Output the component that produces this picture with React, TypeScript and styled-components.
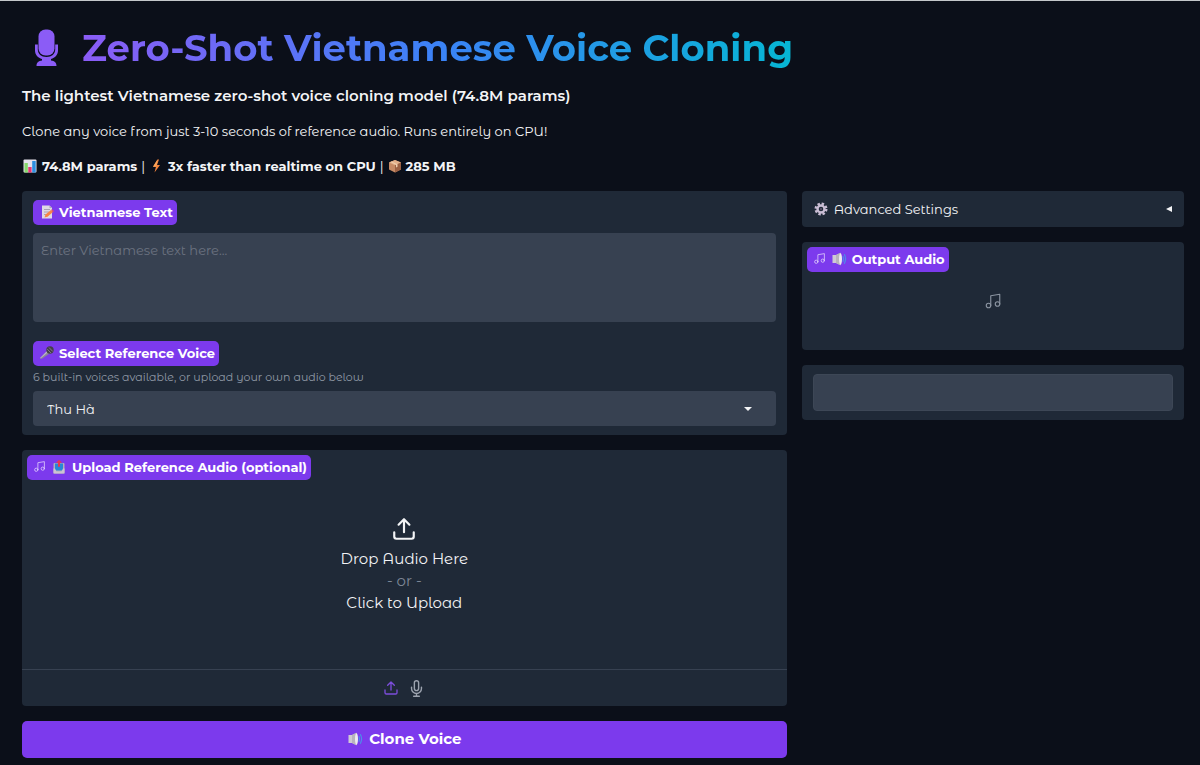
import React, { useState } from "react";
import styled, { createGlobalStyle, css } from "styled-components";

const heading = `Montserrat, Inter, "Noto Sans", sans-serif`;
const bodyFont = `"Montserrat Alternates", Montserrat, Inter, "Noto Sans", sans-serif`;

const GlobalStyle = createGlobalStyle`
  *, *::before, *::after { box-sizing: border-box; }
  body {
    margin: 0;
    background: #0b0f19;
    color: #f3f4f6;
    font-family: ${bodyFont};
    font-size: 13px;
    line-height: 20px;
  }
  button, input, select, textarea { font: inherit; color: inherit; }
`;

const Page = styled.main`
  border-top: 1px solid #c4c7ca;
  padding: 24px 16px 8px 22px;
`;

const Header = styled.header`
  display: flex;
  flex-direction: column;
  gap: 15px;
  margin-bottom: 15px;
`;

const Title = styled.h1`
  display: flex;
  align-items: center;
  gap: 23px;
  margin: 0;
  padding-left: 12px;
  font-family: ${heading};
  font-size: 37px;
  font-weight: 700;
  line-height: 46px;
  color: #8b5cf6;
`;

const GradientText = styled.span`
  background: linear-gradient(90deg, #8b5cf6 0%, #3b82f6 50%, #06b6d4 100%);
  -webkit-background-clip: text;
  background-clip: text;
  color: transparent;
`;

const Tagline = styled.p`
  margin: 0;
  font-family: ${heading};
  font-size: 15px;
  font-weight: 600;
`;

const Intro = styled.p`
  margin: 0;
`;

const Stats = styled.p`
  display: flex;
  align-items: center;
  gap: 4px;
  margin: 0;

  strong { font-family: ${heading}; font-weight: 700; }
`;

const Columns = styled.div`
  display: grid;
  grid-template-columns: minmax(0, 2fr) minmax(0, 1fr);
  gap: 15px;
  align-items: start;
`;

const Column = styled.div`
  display: flex;
  flex-direction: column;
  gap: 15px;
`;

const Panel = styled.section<{ $pad?: string }>`
  display: flex;
  flex-direction: column;
  align-items: stretch;
  padding: ${(p) => p.$pad ?? "9px 11px"};
  background: #1f2937;
  border-radius: 4px;
`;

const tag = css`
  display: flex;
  align-items: center;
  align-self: flex-start;
  height: 25px;
  padding: 0 4px 2px 6px;
  border-radius: 5px;
  background: #7c3aed;
  color: #fff;
  font-family: ${heading};
  font-size: 13px;
  font-weight: 700;
  white-space: nowrap;
`;

const FieldLabel = styled.label`
  ${tag}
  gap: 4px;
`;

const BlockLabel = styled.h2`
  ${tag}
  gap: 5px;
  margin: 0;

  svg:first-child { opacity: 0.75; }
`;

const TextArea = styled.textarea`
  height: 89px;
  margin: 8px 0 19px;
  padding: 7px 8px;
  border: 0;
  border-radius: 4px;
  background: #374151;
  resize: none;

  &::placeholder { color: #6b7280; opacity: 1; }
`;

const Hint = styled.p`
  margin: 1px 0 4px;
  font-size: 11px;
  color: #9099a6;
`;

const SelectBox = styled.div`
  position: relative;

  svg {
    position: absolute;
    right: 24px;
    top: 16px;
    pointer-events: none;
  }
`;

const Select = styled.select`
  display: block;
  width: 100%;
  height: 35px;
  padding: 0 14px;
  border: 0;
  border-radius: 4px;
  background: #374151;
  appearance: none;
`;

const DropZone = styled.button`
  display: flex;
  flex-direction: column;
  align-items: center;
  justify-content: center;
  height: 189px;
  margin: 0;
  padding: 0 0 20px;
  border: 0;
  background: none;
  font-size: 15px;
  line-height: 22px;
  cursor: pointer;

  svg { margin-bottom: 6px; }
`;

const Muted = styled.span`
  color: #7d8796;
`;

const Sources = styled.div`
  display: flex;
  align-items: center;
  justify-content: center;
  gap: 9px;
  height: 37px;
  border-top: 1px solid #374151;
`;

const SourceButton = styled.button<{ $active?: boolean }>`
  display: flex;
  padding: 0;
  border: 0;
  background: none;
  color: ${(p) => (p.$active ? "#7c4ddb" : "#9ca3af")};
  cursor: pointer;
`;

const CloneButton = styled.button`
  display: flex;
  align-items: center;
  justify-content: center;
  gap: 6px;
  height: 37px;
  padding: 0 0 2px;
  border: 0;
  border-radius: 5px;
  background: #7c3aed;
  color: #fff;
  font-family: ${heading};
  font-size: 15px;
  font-weight: 700;
  cursor: pointer;
`;

const Accordion = styled.button`
  display: flex;
  align-items: center;
  gap: 6px;
  height: 36px;
  padding: 0 12px;
  border: 0;
  border-radius: 4px;
  background: #1f2937;
  text-align: left;
  cursor: pointer;

  span { flex: 1; }
`;

const TagPad = styled.div`
  display: flex;
  padding: 5px 5px 0;
`;

const EmptyAudio = styled.div`
  display: flex;
  align-items: center;
  justify-content: center;
  height: 78px;
  padding-bottom: 20px;
  color: #8b94a1;
`;

const StatusInput = styled.input`
  width: 100%;
  height: 37px;
  padding: 0 8px;
  border: 1px solid #3d4756;
  border-radius: 4px;
  background: #374151;
`;

const Line = ({ size, width = 2, children }: { size: number; width?: number; children: React.ReactNode }) => (
  <svg width={size} height={size} viewBox="0 0 24 24" fill="none" stroke="currentColor" strokeWidth={width} strokeLinecap="round" strokeLinejoin="round" aria-hidden="true">
    {children}
  </svg>
);

const MusicIcon = ({ size }: { size: number }) => (
  <Line size={size} width={1.5}>
    <path d="M9 18V5l12-2v13" />
    <circle cx="6" cy="18" r="3" />
    <circle cx="18" cy="16" r="3" />
  </Line>
);

const UploadIcon = ({ size }: { size: number }) => (
  <Line size={size}>
    <path d="M21 15v4a2 2 0 0 1-2 2H5a2 2 0 0 1-2-2v-4" />
    <path d="M17 8l-5-5-5 5M12 3v12" />
  </Line>
);

const MicIcon = ({ size }: { size: number }) => (
  <Line size={size}>
    <path d="M12 1a3 3 0 0 0-3 3v8a3 3 0 0 0 6 0V4a3 3 0 0 0-3-3z" />
    <path d="M19 10v2a7 7 0 0 1-14 0v-2M12 19v4M8 23h8" />
  </Line>
);

const StudioMic = () => (
  <svg width="25" height="38" viewBox="0 0 25 38" fill="currentColor" aria-hidden="true">
    <rect x="4.500" y="0.500" width="16" height="26" rx="7" />
    <path d="M1 15.500h2.800v5c0 4.500 3.500 7.500 8.700 7.500s8.700-3 8.700-7.500v-5H24v6c0 4.500-3 7.200-7 8.500v1.500c3.500.5 5.500 2 5.500 5.500h-20c0-3.500 2-5 5.500-5.500V30c-4-1.300-7-4-7-8.500z" />
  </svg>
);

const ChartEmoji = () => (
  <svg width="16" height="16" viewBox="0 0 16 16" aria-hidden="true">
    <rect x="1.500" y="1.500" width="13" height="13" rx="1" fill="#e6e1ec" />
    <rect x="2.500" y="5" width="3.300" height="9.500" fill="#86d86b" />
    <rect x="6.300" y="9" width="3.300" height="5.500" fill="#e83472" />
    <rect x="10.200" y="3" width="3.500" height="11.500" fill="#2d8fe0" />
  </svg>
);

const BoltEmoji = () => (
  <svg width="15" height="16" viewBox="0 0 15 16" aria-hidden="true">
    <path d="M8.500 1.500L4 8.700h3L5.500 14.500 11 7H8l2-5.500z" fill="#f5843c" />
    <path d="M8.500 1.500L4 8.700h3l1-3z" fill="#fba45a" />
  </svg>
);

const BoxEmoji = () => (
  <svg width="14" height="16" viewBox="1 0 14 16" aria-hidden="true">
    <path d="M8 2l6 2.500v7L8 14.500 2 11.500v-7z" fill="#c78b66" />
    <path d="M8 2l6 2.500L8 7.200 2 4.500z" fill="#e3b08a" />
    <path d="M8 7.200l6-2.700v7l-6 3z" fill="#9c6144" />
    <path d="M4.500 3.500l6 2.700v2.600l-1.500.6V6.700L3.500 4z" fill="#f0d0b0" />
  </svg>
);

const MemoEmoji = () => (
  <svg width="16" height="16" viewBox="0 0 16 16" aria-hidden="true">
    <path d="M3 1.500h7.500l2.500 2.500v10.500H3z" fill="#ded9e5" />
    <path d="M10.500 1.500V4H13z" fill="#aaa4b4" />
    <path d="M5 5.500h6M5 8h5M5 10.500h3" stroke="#a9a3b5" strokeWidth="1" />
    <path d="M5.500 13.500l1-3L12 6l2 2-5.500 4.700z" fill="#f88345" />
    <path d="M12 6l1-.8 2 2-1 .8z" fill="#e44b6a" />
  </svg>
);

const HandMicEmoji = () => (
  <svg width="16" height="16" viewBox="0 0 16 16" aria-hidden="true">
    <path d="M8.500 5.500l2.500 2.800L2.500 14l-1-1z" fill="#8d8896" />
    <path d="M8.500 5.500l1 1.200-8 6.800-.5-.5z" fill="#bcb6c6" />
    <circle cx="11" cy="5" r="3.700" fill="#444049" />
    <path d="M8.300 4.200l3.800 4M10 2.500l3.800 4" stroke="#827b8b" strokeWidth="1" />
  </svg>
);

const OutboxEmoji = () => (
  <svg width="16" height="16" viewBox="0 0 16 16" aria-hidden="true">
    <rect x="2.500" y="4" width="11" height="10.500" rx="1" fill="#b4adbc" />
    <path d="M4 4.500h8v7H4z" fill="#2787d8" />
    <path d="M2.500 9.500H4l1.500 3h5l1.500-3h1.500v5h-11z" fill="#cbc5d2" />
    <path d="M8 .8l3 3H9v4H7v-4H5z" fill="#e63753" />
  </svg>
);

const SpeakerEmoji = () => (
  <svg width="16" height="16" viewBox="0 0 16 16" aria-hidden="true">
    <path d="M1.500 4H5l4.500-2.300v12.600L5 12H1.500z" fill="#cfc9d4" />
    <path d="M5 4l4.500-2.300v12.600L5 12z" fill="#b8b2bd" />
    <ellipse cx="9.500" cy="8" rx="1.500" ry="5.800" fill="#eeeaf1" />
    <path d="M11.800 5.300q1.400 2.700 0 5.400M13.300 3.300q2.600 4.700 0 9.400" stroke="#4a90e8" strokeWidth="1.200" fill="none" />
  </svg>
);

const GearEmoji = () => (
  <svg width="14" height="14" viewBox="0 0 14 14" fill="none" aria-hidden="true">
    <circle cx="7" cy="7" r="5.300" stroke="#c9bdd4" strokeWidth="2.400" strokeDasharray="2.400 1.763" />
    <circle cx="7" cy="7" r="3.500" stroke="#c9bdd4" strokeWidth="2.400" />
    <circle cx="7" cy="7" r="1.200" fill="#544e66" />
  </svg>
);

export default function App() {
  const [text, setText] = useState("");
  const [voice, setVoice] = useState("Thu Hà");

  return (
    <>
      <GlobalStyle />
      <Page>
        <Header>
          <Title>
            <StudioMic />
            <GradientText>Zero-Shot Vietnamese Voice Cloning</GradientText>
          </Title>
          <Tagline>The lightest Vietnamese zero-shot voice cloning model (74.8M params)</Tagline>
          <Intro>Clone any voice from just 3-10 seconds of reference audio. Runs entirely on CPU!</Intro>
          <Stats>
            <ChartEmoji /> <strong>74.8M params</strong> | <BoltEmoji />
            <strong>3x faster than realtime on CPU</strong> | <BoxEmoji /> <strong>285 MB</strong>
          </Stats>
        </Header>

        <Columns>
          <Column>
            <Panel>
              <FieldLabel htmlFor="text"><MemoEmoji />Vietnamese Text</FieldLabel>
              <TextArea id="text" placeholder="Enter Vietnamese text here..." value={text} onChange={(e) => setText(e.target.value)} />
              <FieldLabel htmlFor="voice"><HandMicEmoji />Select Reference Voice</FieldLabel>
              <Hint>6 built-in voices available, or upload your own audio below</Hint>
              <SelectBox>
                <Select id="voice" value={voice} onChange={(e) => setVoice(e.target.value)}>
                  <option>Thu Hà</option>
                </Select>
                <svg width="8" height="4" viewBox="0 0 8 4" aria-hidden="true"><path d="M0 0h8L4 4z" fill="#f3f4f6" /></svg>
              </SelectBox>
            </Panel>

            <Panel $pad="0">
              <TagPad>
                <BlockLabel><MusicIcon size={13} /><OutboxEmoji />Upload Reference Audio (optional)</BlockLabel>
              </TagPad>
              <DropZone type="button">
                <UploadIcon size={26} />
                <span>Drop Audio Here</span>
                <Muted>- or -</Muted>
                <span>Click to Upload</span>
              </DropZone>
              <Sources>
                <SourceButton $active type="button" aria-label="Upload file"><UploadIcon size={16} /></SourceButton>
                <SourceButton type="button" aria-label="Record audio"><MicIcon size={17} /></SourceButton>
              </Sources>
            </Panel>

            <CloneButton type="button"><SpeakerEmoji />Clone Voice</CloneButton>
          </Column>

          <Column>
            <Accordion type="button" aria-expanded="false">
              <GearEmoji />
              <span>Advanced Settings</span>
              <svg width="6" height="6" viewBox="0 0 6 6" aria-hidden="true"><path d="M6 0v6L0 3z" fill="#f3f4f6" /></svg>
            </Accordion>
            <Panel $pad="0">
              <TagPad>
                <BlockLabel><MusicIcon size={13} /><SpeakerEmoji />Output Audio</BlockLabel>
              </TagPad>
              <EmptyAudio><MusicIcon size={18} /></EmptyAudio>
            </Panel>
            <Panel>
              <StatusInput aria-label="Status" readOnly />
            </Panel>
          </Column>
        </Columns>
      </Page>
    </>
  );
}
